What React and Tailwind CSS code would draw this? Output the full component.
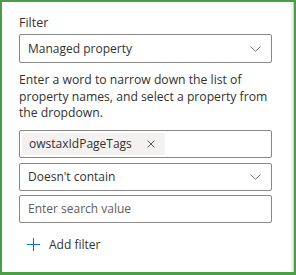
import React from "react";

const font = { fontFamily: '"Open Sans", "Noto Sans", sans-serif' };

function Chevron() {
  return (
    <svg width="11" height="6" viewBox="0 0 11 6" fill="none">
      <path d="M0.5 0.5 L5.5 5.3 L10.5 0.5" stroke="#7a7876" strokeWidth="1" />
    </svg>
  );
}

export default function App() {
  return (
    <div
      className="w-[296px] h-[275px] bg-[#4a9f46] pl-[2px] pt-[2px] pr-[2px] pb-[3px]"
      style={font}
    >
      <div className="flex h-full bg-white">
        <div className="flex-1 pl-[17px] pr-[19px] pt-[12px] text-[12px] text-[#323130]">
          <div className="leading-[18px] font-medium text-[12.5px]">Filter</div>
          <div className="mt-[2px] h-[29px] border border-[#8a8886] rounded-[2px] flex items-center justify-between pl-[8px] pr-[10px]">
            <span className="leading-[18px]">Managed property</span>
            <Chevron />
          </div>
          <div className="mt-[9px] leading-[16.5px] text-[12.2px]">
            Enter a word to narrow down the list of property names, and select a property from the dropdown.
          </div>
          <div className="mt-[8px] h-[28px] border border-[#8a8886] rounded-[2px] flex items-center pl-[2px]">
            <div className="h-[22px] bg-[#f3f2f1] rounded-[2px] flex items-center pl-[7px] pr-[10px] gap-[15px]">
              <span className="leading-[18px]">owstaxIdPageTags</span>
              <svg width="8" height="8" viewBox="0 0 8 8">
                <path d="M0.5 0.5 L7.5 7.5 M7.5 0.5 L0.5 7.5" stroke="#605e5c" strokeWidth="1" />
              </svg>
            </div>
          </div>
          <div className="mt-[5px] h-[28px] border border-[#8a8886] rounded-[2px] flex items-center justify-between pl-[8px] pr-[10px]">
            <span className="leading-[18px]">Doesn't contain</span>
            <Chevron />
          </div>
          <div className="mt-[4px] h-[28px] border border-[#8a8886] rounded-[2px] flex items-center pl-[8px]">
            <span className="leading-[18px] text-[#605e5c]">Enter search value</span>
          </div>
          <div className="mt-[13px] flex items-center pl-[8px] gap-[9px]">
            <svg width="13" height="13" viewBox="0 0 13 13">
              <path d="M6.5 0 V13 M0 6.5 H13" stroke="#0078d4" strokeWidth="1" />
            </svg>
            <span className="leading-[18px]">Add filter</span>
          </div>
        </div>
        <div className="w-[2px] bg-[#f1f1f1]" />
        <div className="w-[1px] bg-[#d0d0d0]" />
      </div>
    </div>
  );
}
